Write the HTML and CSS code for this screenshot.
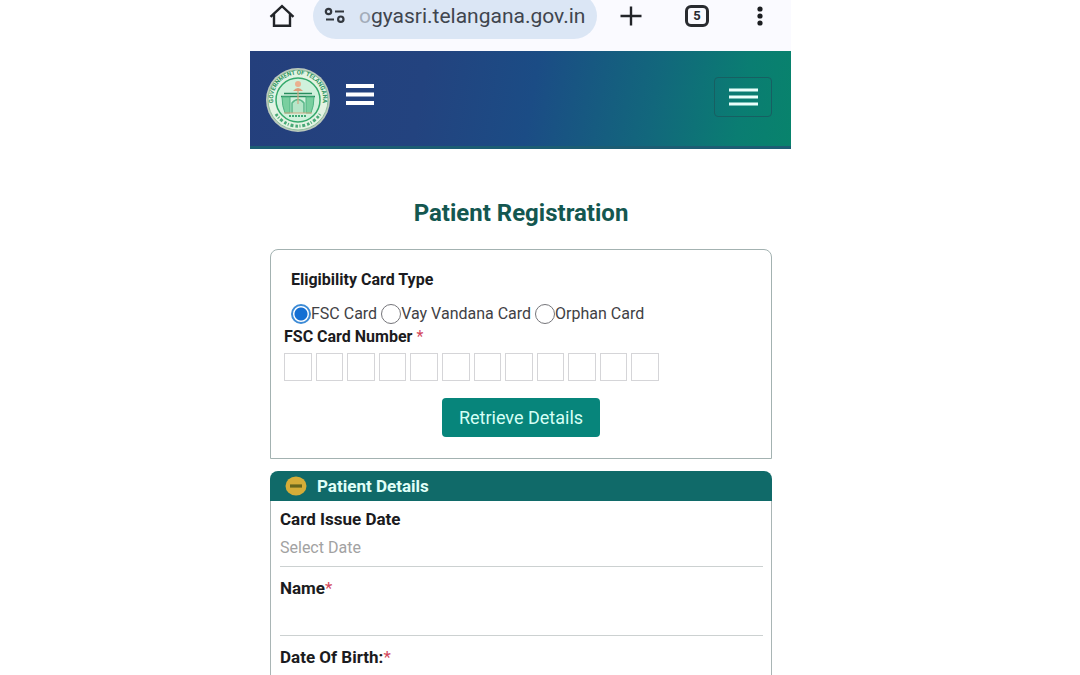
FILE: index.html
```html
<!DOCTYPE html>
<html lang="en">
<head>
<meta charset="utf-8">
<meta name="viewport" content="width=device-width, initial-scale=1">
<title>Patient Registration</title>
<link rel="stylesheet" href="styles.css">
</head>
<body>
<div class="screen">
  <div class="browser-bar">
    <button class="icon-button home" type="button" aria-label="Home">
      <svg width="26" height="24" viewBox="0 0 26 24" fill="none" stroke="#222429" stroke-width="2.4"><path d="M1.500 12.800 13 2.200l11.500 10.600M5 10v11.800h16V10"/></svg>
    </button>
    <a class="address" href="#">
      <svg width="22" height="18" viewBox="0 0 22 18" fill="none" stroke="#33383f" stroke-width="2.200"><circle cx="4.500" cy="4.500" r="2.700"/><path d="M11 4.500h9M2 12.500h8"/><circle cx="16.800" cy="12.200" r="2.700"/></svg>
      <span class="url"><span class="url-fade">o</span>gyasri.telangana.gov.in</span>
    </a>
    <button class="icon-button plus" type="button" aria-label="New tab">
      <svg width="22" height="22" viewBox="0 0 22 22" stroke="#222429" stroke-width="2.400"><path d="M.5 11h21M11 1.500v19"/></svg>
    </button>
    <button class="icon-button tabs" type="button" aria-label="Tabs">5</button>
    <button class="icon-button more" type="button" aria-label="More">
      <svg width="6" height="22" viewBox="0 0 6 22" fill="#1b1d21"><circle cx="3" cy="4" r="2.600"/><circle cx="3" cy="11" r="2.600"/><circle cx="3" cy="18" r="2.600"/></svg>
    </button>
  </div>

  <header class="site-header">
    <svg class="seal" width="66" height="66" viewBox="0 0 66 66" role="img" aria-label="Government of Telangana">
      <defs>
        <path id="arc-top" d="M9.500 41A25 25 0 1 1 56.500 41"/>
      </defs>
      <circle cx="33" cy="33" r="32" fill="#bcc9bd"/>
      <circle cx="33" cy="33" r="30" fill="#e3f3e3" stroke="#8dbf9c" stroke-width="1"/>
      <circle cx="33" cy="33" r="22" fill="#d0f1dc" stroke="#35a96c" stroke-width="1.500"/>
      <text class="seal-text"><textPath href="#arc-top" startOffset="50%" text-anchor="middle">GOVERNMENT OF TELANGANA</textPath></text>
      <path d="M11 47A26 26 0 0 0 55 47" fill="none" stroke="#48a977" stroke-width="3" stroke-dasharray="2.500 1.500 1 1.800 3 2"/>
      <circle cx="33" cy="17" r="3" fill="#eab08f"/>
      <path d="M28 24q5-6 10 0z" fill="#dc9e7b"/>
      <path d="M16 29.500h34M19 26.500h28" stroke="#278d5d" stroke-width="1.300"/>
      <path d="M17 30h8v16h-5q-3-7-3-16zM49 30h-8v16h5q3-7 3-16z" fill="#79cf9f" stroke="#4fb382"/>
      <path d="M27 46V36q6-7 12 0v10" fill="#b6e6c8" stroke="#59b889" stroke-width="1.500"/>
      <path d="M33 24v13M19 46h28" stroke="#d2a784" stroke-width="1.200"/>
      <path d="M24 49h18" stroke="#3fa974" stroke-width="2" stroke-dasharray="2 1"/>
    </svg>
    <button class="icon-button side-menu" type="button" aria-label="Open side menu">
      <svg width="28" height="21" viewBox="0 0 28 21" stroke="#fff" stroke-width="3.800"><path d="M0 2h28M0 10.500h28M0 19h28"/></svg>
    </button>
    <button class="toggler" type="button" aria-label="Toggle navigation">
      <svg width="29" height="18" viewBox="0 0 29 18" stroke="#e9fffb" stroke-width="2.800"><path d="M0 2h29M0 9h29M0 16h29"/></svg>
    </button>
  </header>

  <main class="content">
    <h1 class="title">Patient Registration</h1>

    <form class="card">
      <fieldset class="card-types">
        <legend>Eligibility Card Type</legend>
        <div class="options">
          <label><input type="radio" name="type" checked>FSC Card</label>
          <label><input type="radio" name="type">Vay Vandana Card</label>
          <label><input type="radio" name="type">Orphan Card</label>
        </div>
      </fieldset>
      <label class="number-label" for="d1">FSC Card Number <span class="required">*</span></label>
      <div class="digits">
        <input id="d1" type="text" maxlength="1" aria-label="Digit 1">
        <input type="text" maxlength="1" aria-label="Digit 2">
        <input type="text" maxlength="1" aria-label="Digit 3">
        <input type="text" maxlength="1" aria-label="Digit 4">
        <input type="text" maxlength="1" aria-label="Digit 5">
        <input type="text" maxlength="1" aria-label="Digit 6">
        <input type="text" maxlength="1" aria-label="Digit 7">
        <input type="text" maxlength="1" aria-label="Digit 8">
        <input type="text" maxlength="1" aria-label="Digit 9">
        <input type="text" maxlength="1" aria-label="Digit 10">
        <input type="text" maxlength="1" aria-label="Digit 11">
        <input type="text" maxlength="1" aria-label="Digit 12">
      </div>
      <button class="retrieve" type="button">Retrieve Details</button>
    </form>

    <section class="panel">
      <h2 class="panel-head">
        <svg width="22" height="20" viewBox="0 0 22 20" aria-hidden="true"><ellipse cx="11" cy="10" rx="10.500" ry="9.500" fill="#d5ad38"/><path d="M5 10h12" stroke="#66661d" stroke-width="3.200"/></svg>
        Patient Details
      </h2>
      <div class="fields">
        <div class="field"><label for="issued">Card Issue Date</label><input id="issued" type="text" placeholder="Select Date"></div>
        <div class="field"><label for="name">Name<span class="required">*</span></label><input id="name" type="text"></div>
        <div class="field"><label for="birth">Date Of Birth:<span class="required">*</span></label><input id="birth" type="text"></div>
      </div>
    </section>
  </main>
</div>
</body>
</html>
```
FILE: styles.css
```css
* { box-sizing: border-box; }

body {
  margin: 0;
  height: 100vh;
  overflow: hidden;
  display: grid;
  grid-template-columns: 250fr 541fr 289fr;
  background: #fff;
  color: #1b1b20;
  font: 16px/20px Roboto, "Liberation Sans", sans-serif;
}

button, input { font: inherit; }

.screen { grid-column: 2; min-width: 0; }

.icon-button {
  display: flex;
  align-items: center;
  justify-content: center;
  padding: 0;
  border: 0;
  background: none;
}

.browser-bar {
  display: flex;
  align-items: center;
  height: 51px;
  padding: 0 28px 19px 19px;
  background: #fafaff;
}

.address {
  display: flex;
  align-items: center;
  gap: 13px;
  flex: 1;
  max-width: 284px;
  height: 46px;
  margin: 0 23px 0 18px;
  padding: 0 11px;
  border-radius: 23px;
  background: #dbe6f5;
  color: #40454e;
  font-size: 21px;
  text-decoration: none;
  white-space: nowrap;
}

.url-fade { color: #a3acb9; }

.tabs {
  width: 24px;
  height: 22px;
  margin-left: 43px;
  border: 3px solid #292b30;
  border-radius: 6px;
  color: #292b30;
  font-size: 13px;
  font-weight: 700;
}

.more { margin-left: auto; }

.site-header {
  display: flex;
  align-items: center;
  height: 98px;
  padding: 0 19px 0 15px;
  border-bottom: 3px solid #1c5d73;
  background: linear-gradient(100deg, #243f7c 0%, #23437f 32%, #1b4c85 52%, #12677c 74%, #0a7d72 90%, #08836c 100%);
}

.seal-text { fill: #2d9461; font-size: 6px; font-weight: 700; }
.seal { margin-top: 3px; }
.side-menu { margin: 0 auto 9px 15px; }

.toggler {
  display: flex;
  align-items: center;
  justify-content: center;
  width: 58px;
  height: 40px;
  margin-bottom: 4px;
  padding: 0;
  border: 1px solid #175f62;
  border-radius: 4px;
  background: none;
}

.content { padding: 50px 19px 0 20px; }

.title {
  margin: 0 0 22px;
  color: #145750;
  font-size: 24px;
  font-weight: 700;
  line-height: 28px;
  text-align: center;
}

.card {
  display: flex;
  flex-direction: column;
  align-items: flex-start;
  margin-bottom: 12px;
  padding: 20px 13px 21px;
  border: 1px solid #a3b2b1;
  border-radius: 8px 8px 0 0;
}

.card-types { margin: 0; padding: 0 7px; border: 0; }
.card-types legend { padding: 0; font-weight: 700; }

.options { display: flex; gap: 4px; padding-top: 14px; }
.options label { display: flex; align-items: center; color: #414144; }

.options input {
  appearance: none;
  width: 20px;
  height: 20px;
  margin: 0;
  border: 1px solid #75757a;
  border-radius: 50%;
}

.options input:checked {
  border: 2px solid #3d8bd6;
  background: radial-gradient(circle, #146fd3 6px, #fff 7px);
}

.number-label { padding-top: 3px; font-weight: 700; }
.required { color: #d3475c; font-weight: 400; }

.digits {
  display: grid;
  grid-template-columns: repeat(12, 1fr);
  gap: 4px;
  width: 100%;
  max-width: 375px;
  padding-top: 6px;
}

.digits input {
  width: 100%;
  height: 28px;
  padding: 0;
  border: 1px solid #d5d5d8;
  text-align: center;
}

.retrieve {
  align-self: center;
  height: 39px;
  margin-top: 17px;
  padding: 0 17px;
  border: 0;
  border-radius: 4px;
  background: #07857b;
  color: #d5fff5;
  font-size: 18px;
}

.panel-head {
  display: flex;
  align-items: center;
  gap: 10px;
  height: 30px;
  margin: 0;
  padding: 0 15px;
  border-radius: 8px 8px 0 0;
  background: #106a69;
  color: #e0fff8;
  font-size: 17px;
  font-weight: 700;
}

.fields {
  padding: 8px 8px 0 9px;
  border: solid #a9b5b5;
  border-width: 0 1px;
}

.field { display: flex; flex-direction: column; padding-bottom: 11px; }
.field label { font-weight: 700; font-size: 17px; }

.field input {
  width: 100%;
  height: 38px;
  padding: 0;
  border: 0;
  border-bottom: 1px solid #ccd1d1;
  background: none;
}

.field input::placeholder { color: #a2a2a2; opacity: 1; }
```
